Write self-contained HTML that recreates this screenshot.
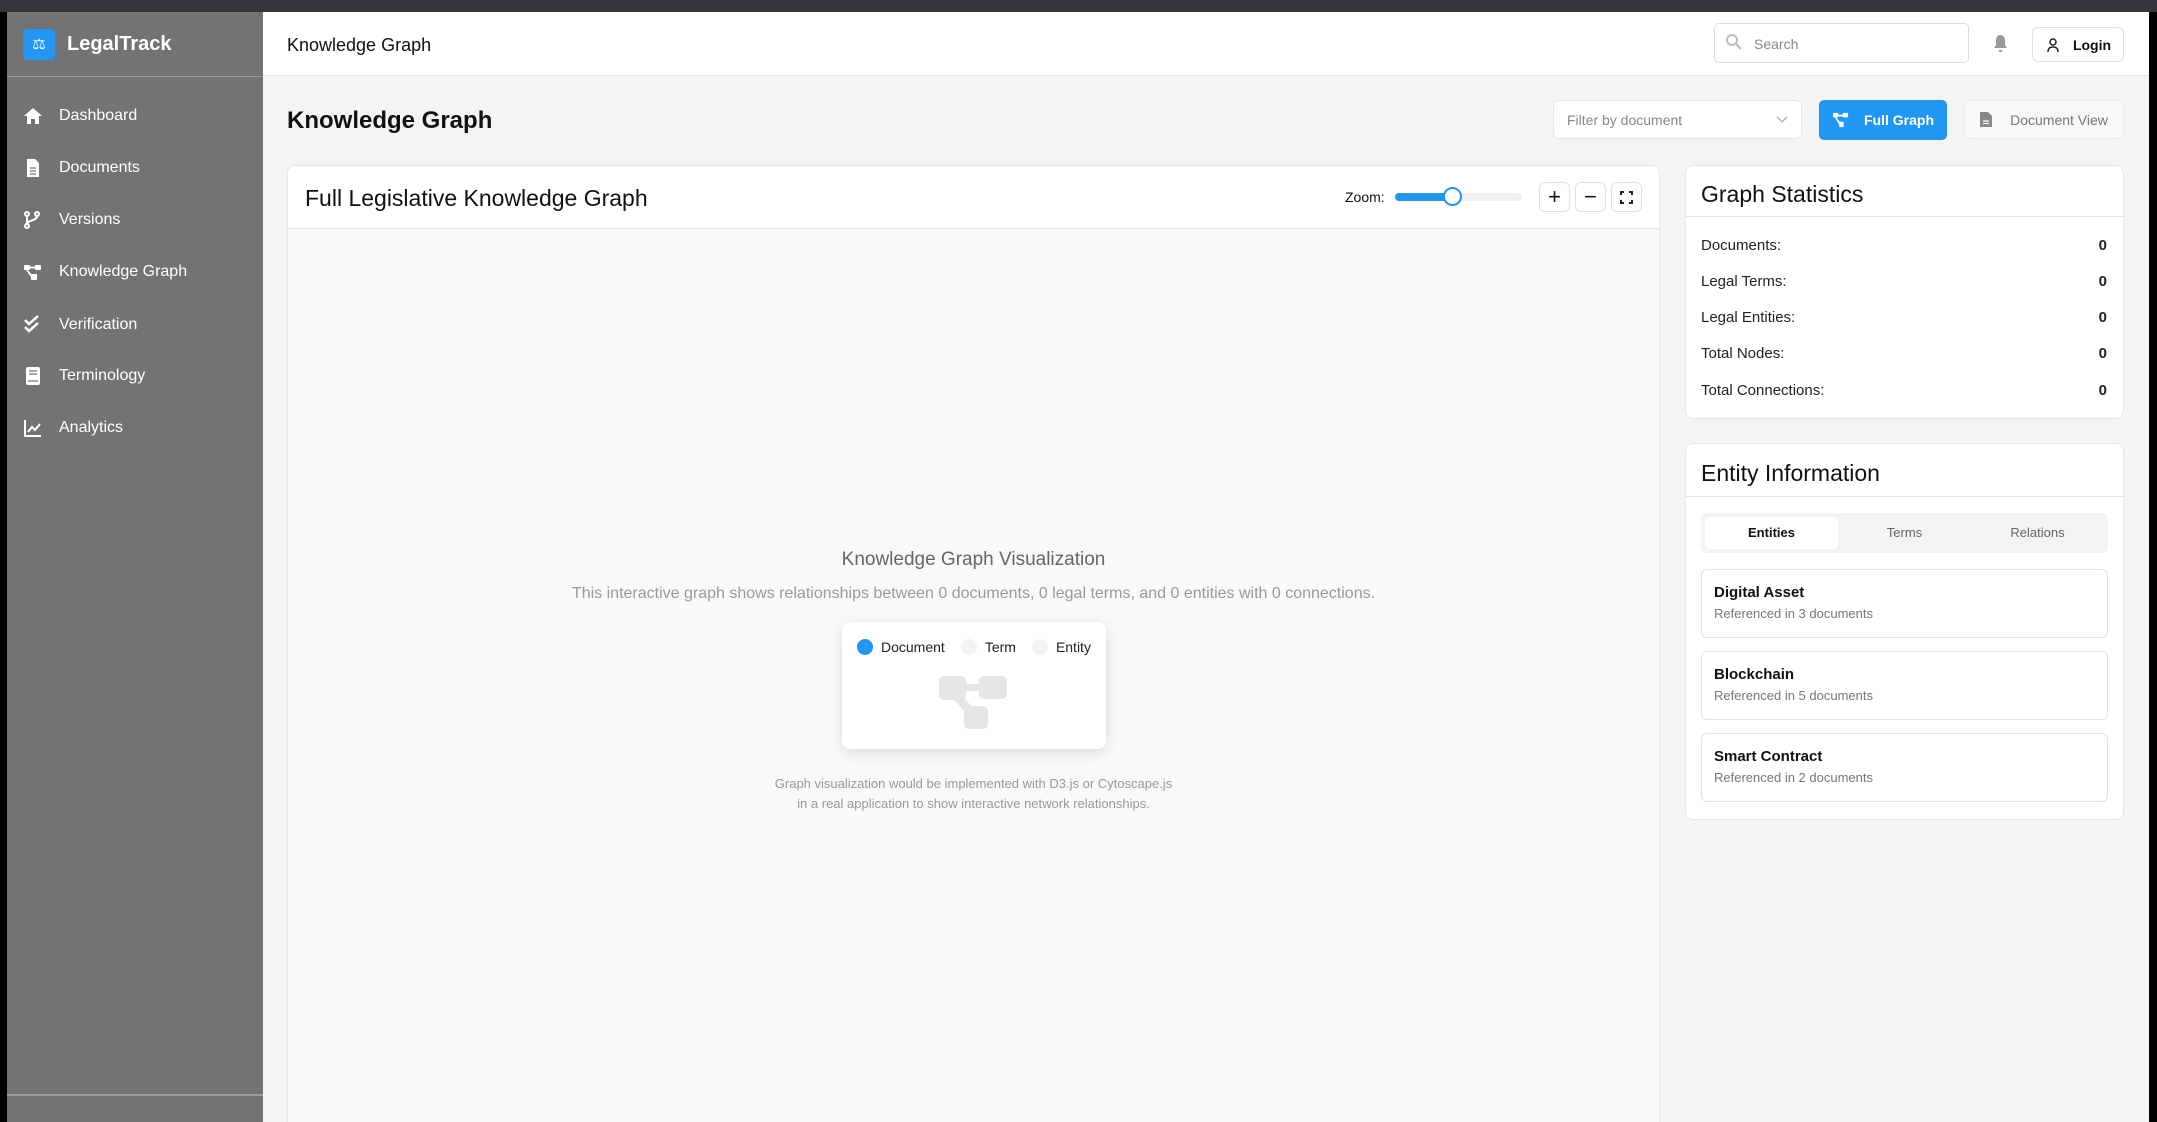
<!DOCTYPE html>
<html><head><meta charset="utf-8">
<style>
*{box-sizing:border-box;margin:0;padding:0}
html,body{width:2157px;height:1122px;overflow:hidden}
body{background:#000;font-family:"Liberation Sans",sans-serif;position:relative;color:#111}
.a{position:absolute}
#top{left:0;top:0;width:2157px;height:12px;background:#35363a}
#side{left:7px;top:12px;width:256px;height:1110px;background:#737373}
#main{left:263px;top:12px;width:1886px;height:1110px;background:#f4f4f4}
#hdr{left:263px;top:12px;width:1886px;height:64px;background:#fff;border-bottom:1px solid #e3e3e3}
.nav{left:23px;color:#fff;font-size:16px;display:flex;align-items:center;height:24px}
.nav svg{width:20px;height:20px;margin-right:16px}
.card{background:#fff;border:1px solid #e6e6e6;border-radius:8px}
.btn{border:1px solid #e0e0e0;border-radius:6px;background:#fff;display:flex;align-items:center;justify-content:center}
.row{left:1701px;width:406px;display:flex;justify-content:space-between;font-size:15px;color:#222;line-height:20px}
.row b{font-weight:700}
.item{left:1701px;width:407px;height:69px;border:1px solid #e2e2e2;border-radius:6px;background:#fff;padding:14px 12px}
.item b{display:block;font-size:15px;color:#111;line-height:18px}
.item span{display:block;font-size:13px;color:#777;margin-top:4px}
</style></head><body>
<div id="top" class="a"></div>
<div id="side" class="a">
 <div class="a" style="left:0;top:64px;width:256px;height:1px;background:#9a9a9a"></div>
 <div class="a" style="left:0;top:1082px;width:256px;height:2px;background:#9a9a9a"></div>
</div>
<div class="a" style="left:23px;top:29px;width:32px;height:31px;background:#2196f3;border-radius:4px;color:#fff;font-size:15px;text-align:center;line-height:31px">⚖</div>
<div class="a" style="left:67px;top:30px;color:#fff;font-size:20px;font-weight:bold;line-height:28px">LegalTrack</div>

<div class="a nav" style="top:104px"><svg viewBox="0 0 20 20"><path d="M10 2L1 10h3v8h4v-5h4v5h4v-8h3z" fill="#fff"/></svg>Dashboard</div>
<div class="a nav" style="top:156px"><svg viewBox="0 0 20 20"><path d="M4 1h8l4 4v14H4z" fill="#fff"/><path d="M7 10h6M7 13h6M7 16h6" stroke="#737373" stroke-width="1.3"/></svg>Documents</div>
<div class="a nav" style="top:208px"><svg viewBox="0 0 20 20"><g fill="none" stroke="#fff" stroke-width="2"><circle cx="4" cy="4" r="2"/><circle cx="4" cy="16" r="2"/><circle cx="14" cy="4" r="2"/><path d="M4 6v8M14 6c0 5-10 4-10 8"/></g></svg>Versions</div>
<div class="a nav" style="top:260px"><svg viewBox="0 0 20 20" fill="#fff"><rect x="1" y="3" width="6" height="5" rx="1"/><rect x="12" y="3" width="6" height="5" rx="1"/><rect x="8" y="12" width="6" height="6" rx="1"/><path d="M6 4.5h7v2H6zM4 7l6 7-2 1-5-7z"/></svg>Knowledge Graph</div>
<div class="a nav" style="top:313px"><svg viewBox="0 0 20 20"><path d="M2 5l4 4 9-8M2 12l4 4 9-8" fill="none" stroke="#fff" stroke-width="2.5"/></svg>Verification</div>
<div class="a nav" style="top:364px"><svg viewBox="0 0 20 20"><rect x="3" y="1" width="14" height="18" rx="2" fill="#fff"/><path d="M5 15h10M6 5h8M6 8h8" stroke="#737373" stroke-width="1.3"/></svg>Terminology</div>
<div class="a nav" style="top:416px"><svg viewBox="0 0 20 20"><path d="M2 2v16h16" fill="none" stroke="#fff" stroke-width="2"/><path d="M5 14l4-5 3 3 5-6" fill="none" stroke="#fff" stroke-width="2"/></svg>Analytics</div>

<div id="main" class="a"></div>
<div id="hdr" class="a"></div>
<div class="a" style="left:287px;top:33px;font-size:18px;line-height:24px">Knowledge Graph</div>
<div class="a" style="left:1714px;top:23px;width:255px;height:40px;border:1px solid #ddd;border-radius:5px"></div>
<svg class="a" style="left:1725px;top:33px" width="18" height="18" viewBox="0 0 18 18"><circle cx="7" cy="7" r="5" fill="none" stroke="#bbb" stroke-width="1.8"/><path d="M11 11l5 5" stroke="#bbb" stroke-width="2"/></svg>
<div class="a" style="left:1754px;top:34px;font-size:14px;color:#888;line-height:20px">Search</div>
<svg class="a" style="left:1992px;top:34px" width="17" height="19" viewBox="0 0 17 19"><path d="M8.5 1C5 1 4 4 4 7v4l-2 3h13l-2-3V7c0-3-1-6-4.5-6z M6.5 16h4a2 2 0 0 1-4 0z" fill="#999"/></svg>
<div class="a btn" style="left:2032px;top:27px;width:92px;height:35px;font-size:14px;font-weight:bold"><svg width="16" height="16" viewBox="0 0 16 16" style="margin-right:12px"><circle cx="8" cy="5" r="3" fill="none" stroke="#222" stroke-width="1.5"/><path d="M3 15c0-4 2-5 5-5s5 1 5 5" fill="none" stroke="#222" stroke-width="1.5"/></svg>Login</div>

<div class="a" style="left:287px;top:106px;font-size:24px;font-weight:bold;line-height:30px">Knowledge Graph</div>
<div class="a btn" style="left:1553px;top:100px;width:249px;height:39px;justify-content:space-between;padding:0 13px;font-size:14px;color:#888;border-color:#e6e6e6">Filter by document<svg width="12" height="8" viewBox="0 0 12 8"><path d="M1 1l5 5 5-5" fill="none" stroke="#aaa" stroke-width="1.3"/></svg></div>
<div class="a" style="left:1819px;top:100px;width:128px;height:40px;background:#2196f3;border-radius:5px;color:#fff;font-size:14px;font-weight:bold;display:flex;align-items:center;justify-content:center"><svg width="18" height="16" viewBox="0 0 20 18" fill="#fff" style="margin-right:14px"><rect x="1" y="1" width="6" height="5" rx="1"/><rect x="12" y="1" width="6" height="5" rx="1"/><rect x="8" y="11" width="5" height="6" rx="1"/><path d="M6 3h7v2H6zM4 5l6 8-2 1-5-8z"/></svg>Full Graph</div>
<div class="a btn" style="left:1964px;top:100px;width:160px;height:39px;background:#f8f8f8;border-color:#eaeaea;font-size:14px;color:#777"><svg width="12" height="15" viewBox="0 0 12 15" style="margin-right:18px"><path d="M0 0h8l4 4v11H0z" fill="#888"/><path d="M3 9h6M3 11.5h6" stroke="#f8f8f8" stroke-width="1.2"/></svg>Document View</div>

<!-- main card -->
<div class="a card" style="left:287px;top:165px;width:1373px;height:980px;background:#f9f9f9;overflow:hidden">
 <div style="height:63px;background:#fff;border-bottom:1px solid #e3e3e3"></div>
</div>
<div class="a" style="left:305px;top:184px;font-size:23px;line-height:28px">Full Legislative Knowledge Graph</div>
<div class="a" style="left:1345px;top:188px;font-size:14px;line-height:18px">Zoom:</div>
<div class="a" style="left:1395px;top:193px;width:127px;height:8px;background:#f0f0f0;border-radius:4px"></div>
<div class="a" style="left:1395px;top:193px;width:58px;height:8px;background:#2196f3;border-radius:4px"></div>
<div class="a" style="left:1443px;top:187px;width:19px;height:19px;border:2.5px solid #2196f3;background:#fff;border-radius:50%"></div>
<div class="a btn" style="left:1539px;top:182px;width:31px;height:30px;font-size:22px">+</div>
<div class="a btn" style="left:1575px;top:182px;width:31px;height:30px;font-size:22px">−</div>
<div class="a btn" style="left:1611px;top:182px;width:31px;height:30px"><svg width="13" height="13" viewBox="0 0 13 13" fill="none" stroke="#222" stroke-width="2"><path d="M1 4V1h3M9 1h3v3M12 9v3H9M4 12H1V9"/></svg></div>

<div class="a" style="left:287px;top:548px;width:1373px;text-align:center;font-size:19px;color:#666;line-height:24px">Knowledge Graph Visualization</div>
<div class="a" style="left:287px;top:584px;width:1373px;text-align:center;font-size:16px;color:#999;line-height:20px">This interactive graph shows relationships between 0 documents, 0 legal terms, and 0 entities with 0 connections.</div>
<div class="a" style="left:842px;top:622px;width:264px;height:127px;background:#fff;border-radius:8px;box-shadow:0 4px 14px rgba(0,0,0,0.12)"></div>
<div class="a" style="left:857px;top:638px;display:flex;align-items:center;font-size:14px;color:#222;line-height:18px">
 <span style="width:16px;height:16px;border-radius:50%;background:#2196f3;margin-right:8px"></span>Document
 <span style="width:16px;height:16px;border-radius:50%;background:#f2f2f2;margin:0 8px 0 16px"></span>Term
 <span style="width:16px;height:16px;border-radius:50%;background:#f2f2f2;margin:0 8px 0 16px"></span>Entity
</div>
<svg class="a" style="left:939px;top:676px" width="68" height="53" viewBox="0 0 68 53" fill="#e6e6e6"><rect x="0" y="0" width="27" height="24" rx="5"/><rect x="40" y="0" width="28" height="23" rx="5"/><rect x="20" y="8" width="30" height="7"/><path d="M12 20l14 16 8-4-12-14z"/><rect x="25" y="30" width="24" height="23" rx="5"/></svg>
<div class="a" style="left:287px;top:774px;width:1373px;text-align:center;font-size:13px;color:#999;line-height:20px">Graph visualization would be implemented with D3.js or Cytoscape.js<br>in a real application to show interactive network relationships.</div>

<!-- stats -->
<div class="a card" style="left:1685px;top:165px;width:439px;height:254px"><div style="height:51px;border-bottom:1px solid #e3e3e3"></div></div>
<div class="a" style="left:1701px;top:180px;font-size:23px;line-height:28px">Graph Statistics</div>
<div class="a row" style="top:236px"><span>Documents:</span><b>0</b></div>
<div class="a row" style="top:272px"><span>Legal Terms:</span><b>0</b></div>
<div class="a row" style="top:308px"><span>Legal Entities:</span><b>0</b></div>
<div class="a row" style="top:344px"><span>Total Nodes:</span><b>0</b></div>
<div class="a row" style="top:381px"><span>Total Connections:</span><b>0</b></div>

<!-- entity -->
<div class="a card" style="left:1685px;top:443px;width:439px;height:377px"><div style="height:53px;border-bottom:1px solid #e3e3e3"></div></div>
<div class="a" style="left:1701px;top:459px;font-size:23px;line-height:28px">Entity Information</div>
<div class="a" style="left:1701px;top:513px;width:407px;height:40px;background:#f3f3f3;border-radius:6px;font-size:13px;color:#666">
 <div class="a" style="left:4px;top:4px;width:133px;height:32px;background:#fff;border-radius:5px;text-align:center;line-height:32px;color:#111;font-weight:bold">Entities</div>
 <div class="a" style="left:137px;top:4px;width:133px;text-align:center;line-height:32px">Terms</div>
 <div class="a" style="left:270px;top:4px;width:133px;text-align:center;line-height:32px">Relations</div>
</div>
<div class="a item" style="top:569px"><b>Digital Asset</b><span>Referenced in 3 documents</span></div>
<div class="a item" style="top:651px"><b>Blockchain</b><span>Referenced in 5 documents</span></div>
<div class="a item" style="top:733px"><b>Smart Contract</b><span>Referenced in 2 documents</span></div>
</body></html>
